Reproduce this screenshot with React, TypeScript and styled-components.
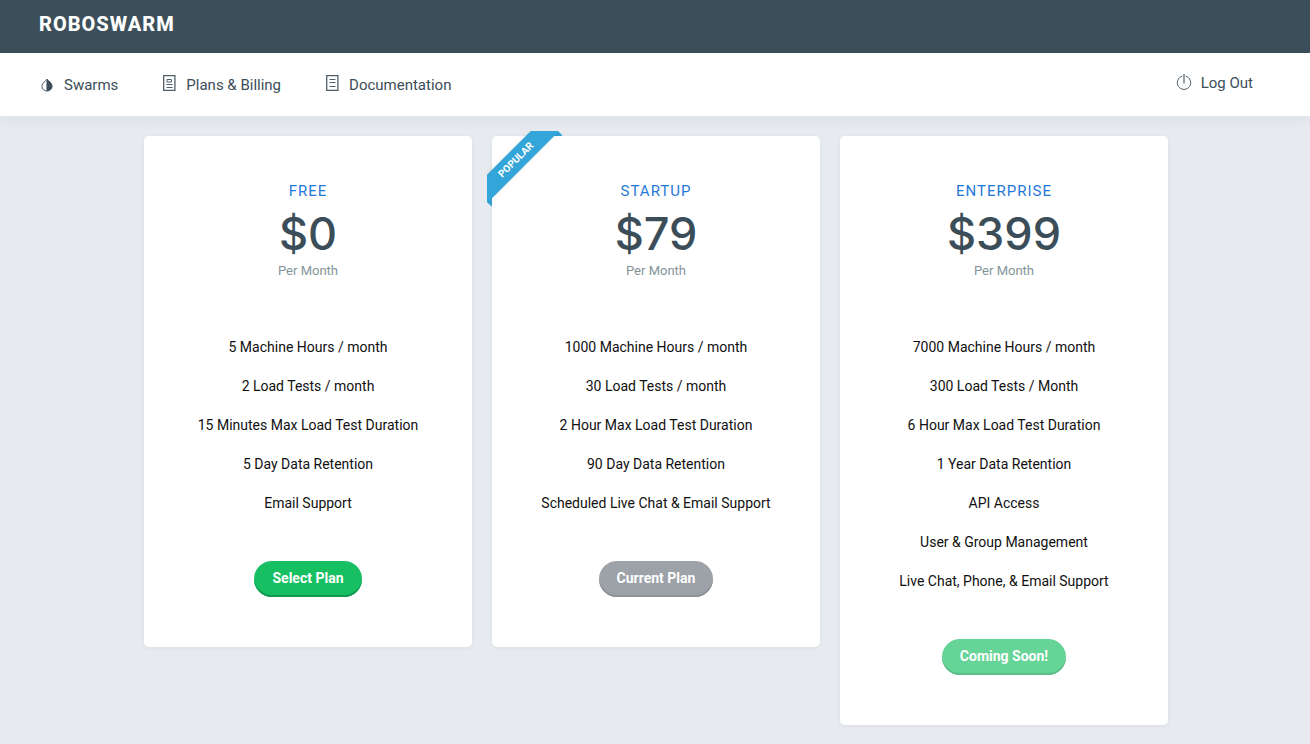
import React from "react";
import styled, { createGlobalStyle } from "styled-components";

const GlobalStyle = createGlobalStyle`
  * { box-sizing: border-box; }
  html { background: #e7eaee; }
  body {
    margin: 0;
    font-family: Roboto, "Liberation Sans", sans-serif;
    font-size: 15px;
    color: #3b4d58;
  }
`;

const TopBar = styled.header`
  background: #3c4f5a;
  padding: 12px 39px 17px;
`;

const Brand = styled.a`
  display: block;
  width: fit-content;
  color: #fff;
  font-size: 20px;
  font-weight: 800;
  line-height: 24px;
  letter-spacing: 1px;
  text-decoration: none;
`;

const Nav = styled.nav`
  display: flex;
  justify-content: space-between;
  padding: 0 57px 0 39px;
  background: #fff;
  box-shadow: 0 1px 15px 1px rgba(40, 50, 60, 0.06);
`;

const NavGroup = styled.div`
  display: flex;
  gap: 43px;
`;

const NavLink = styled.a<{ $raised?: boolean }>`
  display: flex;
  align-items: center;
  gap: 9px;
  height: 63px;
  padding-bottom: ${(p) => (p.$raised ? 4 : 0)}px;
  color: #3b4d58;
  line-height: 24px;
  text-decoration: none;
`;

const Icon = styled.svg`
  width: 16px;
  height: 21px;
  fill: none;
  stroke: #4d5f6a;
`;

const Plans = styled.main`
  display: grid;
  grid-template-columns: repeat(auto-fit, minmax(280px, 1fr));
  align-items: start;
  gap: 20px;
  max-width: 1026px;
  margin: 0 auto;
  padding: 20px 0 19px 2px;
`;

const Card = styled.section`
  position: relative;
  display: flex;
  flex-direction: column;
  align-items: center;
  padding: 43px 20px 50px;
  background: #fff;
  border-radius: 5px;
  box-shadow: 0 1px 5px rgba(40, 50, 60, 0.06);
  text-align: center;
`;

const PlanName = styled.h2`
  margin: 0;
  color: #1f78d8;
  font-size: 15px;
  font-weight: 400;
  line-height: 24px;
  letter-spacing: 1px;
  text-transform: uppercase;
`;

const Price = styled.div`
  font-family: Inter, Roboto, sans-serif;
  font-size: 45px;
  font-weight: 450;
  line-height: 62px;
`;

const Period = styled.div`
  color: #84949b;
  font-size: 13px;
  line-height: 12px;
`;

const Features = styled.ul`
  margin: 51px 0 38px;
  padding: 0;
  list-style: none;
  color: #101010;
  font-size: 14px;
  line-height: 39px;
`;

const PlanButton = styled.button<{ $tone: string; $edge: string }>`
  height: 36px;
  padding: 0 18px 2px;
  border: 0;
  border-radius: 18px;
  background: ${(p) => p.$tone};
  box-shadow: inset 0 -2px 0 ${(p) => p.$edge};
  color: #fff;
  font-family: inherit;
  font-size: 14px;
  font-weight: 700;
  line-height: 24px;
`;

const RibbonClip = styled.div`
  position: absolute;
  top: -5px;
  left: -5px;
  width: 75px;
  height: 75px;
  overflow: hidden;
  &::before,
  &::after {
    content: "";
    position: absolute;
    background: #34a2d3;
  }
  &::before {
    top: 0;
    right: 0;
    width: 10px;
    height: 5px;
    clip-path: polygon(0 0, 60% 0, 100% 80%, 100% 100%, 0 100%);
  }
  &::after {
    bottom: 0;
    left: 0;
    width: 5px;
    height: 10px;
    clip-path: polygon(0 0, 0 60%, 80% 100%, 100% 100%, 100% 0);
  }
`;

const Ribbon = styled.span`
  position: absolute;
  z-index: 1;
  top: 19px;
  left: -21px;
  width: 100px;
  background: #34a5d8;
  color: #fff;
  font-size: 10px;
  font-weight: 700;
  line-height: 20px;
  text-align: center;
  transform: rotate(-45deg);
  box-shadow: 0 0 5px rgba(0, 0, 0, 0.08);
`;

interface Plan {
  name: string;
  price: string;
  features: string[];
  action: string;
  tone: string;
  edge: string;
  popular?: boolean;
}

const plans: Plan[] = [
  {
    name: "Free",
    price: "$0",
    features: [
      "5 Machine Hours / month",
      "2 Load Tests / month",
      "15 Minutes Max Load Test Duration",
      "5 Day Data Retention",
      "Email Support",
    ],
    action: "Select Plan",
    tone: "#17bf63",
    edge: "#12994f",
  },
  {
    name: "Startup",
    price: "$79",
    features: [
      "1000 Machine Hours / month",
      "30 Load Tests / month",
      "2 Hour Max Load Test Duration",
      "90 Day Data Retention",
      "Scheduled Live Chat & Email Support",
    ],
    action: "Current Plan",
    tone: "#9da2a8",
    edge: "#8d9298",
    popular: true,
  },
  {
    name: "Enterprise",
    price: "$399",
    features: [
      "7000 Machine Hours / month",
      "300 Load Tests / Month",
      "6 Hour Max Load Test Duration",
      "1 Year Data Retention",
      "API Access",
      "User & Group Management",
      "Live Chat, Phone, & Email Support",
    ],
    action: "Coming Soon!",
    tone: "#66d496",
    edge: "#5fbd89",
  },
];

function DropIcon() {
  return (
    <Icon viewBox="0 0 16 21" aria-hidden="true">
      <path d="M8 5.300C6.600 7 2.900 8.900 2.900 12.200A5.100 4.800 0 0 0 8 17" />
      <path
        d="M8 5.300C9.400 7 13.100 8.900 13.100 12.200A5.100 4.800 0 0 1 8 17Z"
        fill="#3b4d58"
        stroke="#3b4d58"
      />
    </Icon>
  );
}

function PlansIcon() {
  return (
    <Icon viewBox="0 0 16 21" aria-hidden="true">
      <path d="M2.700 1.600h11.200v14.800h-11.200z" strokeWidth="1.300" />
      <path d="M6 5.500h4.500v2.500h-4.500z M5.500 10.500h6 M5.500 13.500h6" />
    </Icon>
  );
}

function DocumentIcon() {
  return (
    <Icon viewBox="0 0 16 21" aria-hidden="true">
      <path d="M2.700 1.600h11.200v14.800h-11.200z" strokeWidth="1.300" />
      <path d="M5.500 5.500h6 M5.500 8.500h6 M5.500 12.500h6" />
    </Icon>
  );
}

function PowerIcon() {
  return (
    <Icon viewBox="0 0 16 21" aria-hidden="true">
      <path d="M6.300 4.200a6.700 6.700 0 1 0 3.400 0" />
      <path d="M8 2v9.500" stroke="#98a2a8" strokeWidth="2" />
    </Icon>
  );
}

export default function App() {
  return (
    <>
      <GlobalStyle />
      <TopBar>
        <Brand href="#">ROBOSWARM</Brand>
      </TopBar>
      <Nav>
        <NavGroup>
          <NavLink href="#swarms"><DropIcon />Swarms</NavLink>
          <NavLink href="#plans"><PlansIcon />Plans &amp; Billing</NavLink>
          <NavLink href="#docs"><DocumentIcon />Documentation</NavLink>
        </NavGroup>
        <NavLink href="#logout" $raised><PowerIcon />Log Out</NavLink>
      </Nav>
      <Plans>
        {plans.map((plan) => (
          <Card key={plan.name}>
            {plan.popular && (
              <RibbonClip>
                <Ribbon>POPULAR</Ribbon>
              </RibbonClip>
            )}
            <PlanName>{plan.name}</PlanName>
            <Price>{plan.price}</Price>
            <Period>Per Month</Period>
            <Features>
              {plan.features.map((feature) => (
                <li key={feature}>{feature}</li>
              ))}
            </Features>
            <PlanButton type="button" $tone={plan.tone} $edge={plan.edge}>
              {plan.action}
            </PlanButton>
          </Card>
        ))}
      </Plans>
    </>
  );
}
